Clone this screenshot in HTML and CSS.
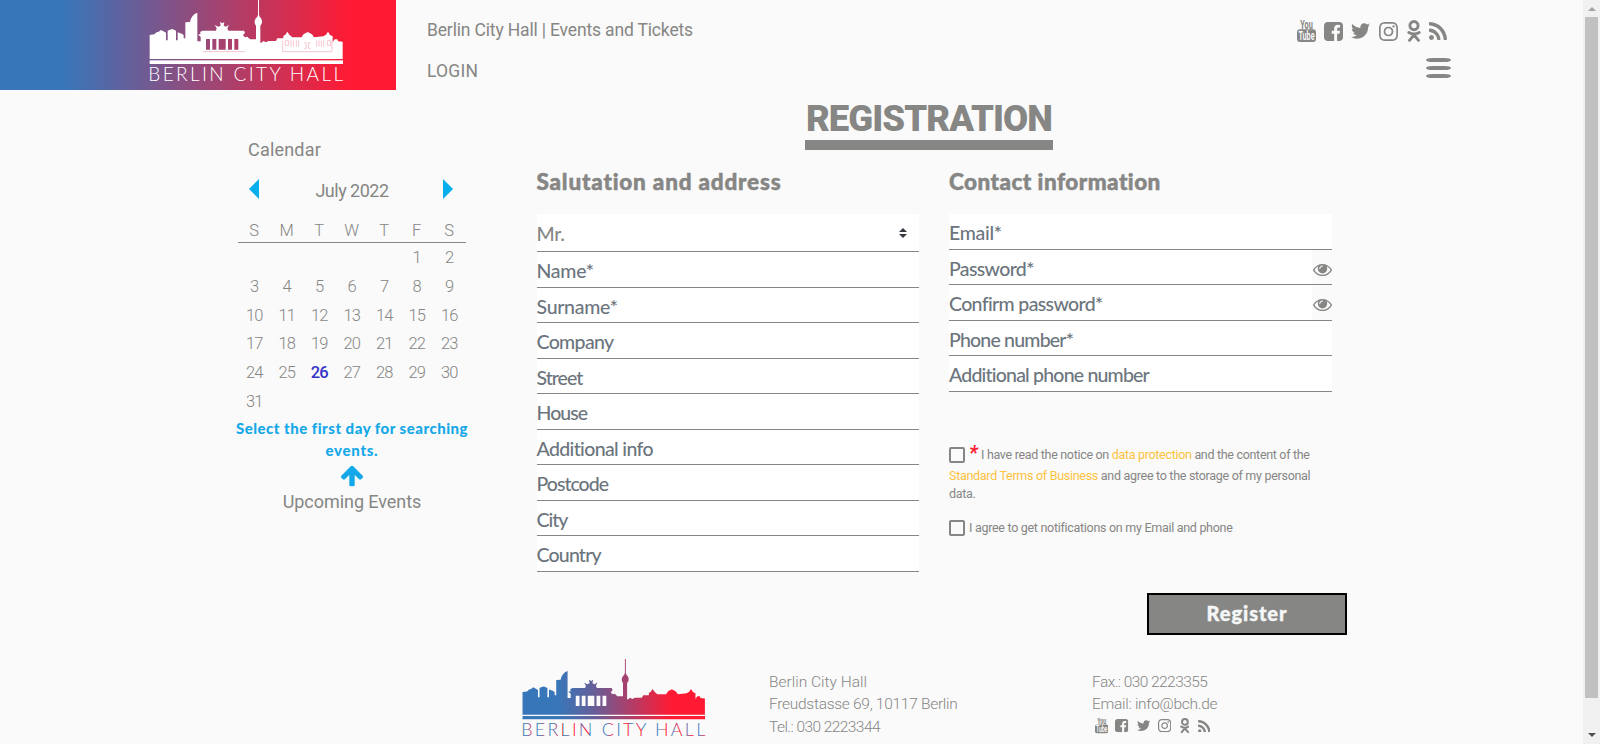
FILE: index.html
```html
<!DOCTYPE html>
<html lang="en">
<head>
<meta charset="utf-8">
<title>Berlin City Hall | Registration</title>
<link rel="stylesheet" href="styles.css">
</head>
<body>
<svg class="defs" aria-hidden="true">
  <defs>
    <linearGradient id="city" gradientUnits="userSpaceOnUse" x1="560" y1="0" x2="920" y2="0"><stop offset="0" stop-color="#3777b9"/><stop offset=".3" stop-color="#62609b"/><stop offset="1" stop-color="#ff1a33"/></linearGradient>
    <linearGradient id="letters" gradientUnits="userSpaceOnUse" x1="450" y1="0" x2="492" y2="0" spreadMethod="repeat"><stop offset="0" stop-color="#3777b9"/><stop offset=".3" stop-color="#3777b9"/><stop offset=".75" stop-color="#ff1a33"/><stop offset="1" stop-color="#ff1a33"/></linearGradient>
    <symbol id="skyline" viewBox="447 0 582 192">
      <path fill-rule="evenodd" d="M449 177V105L463 103L470 97L476 95L483 90L490 94L498 98V121H503V92L510 89L517 87L528 92V121H533V97L545 101L551 105V115H556V67L570 66Q574 44 592 38V124H602V110L594 104L602 102L600 96L608 92H648L650 84L644 75L655 80L662 77L660 66L667 70L673 66L671 77L678 80L687 74L682 85L685 92H732L735 98L729 106L735 112L742 110L750 118H768V77Q763 72 764 63Q766 54 772 50L774 44V0H777V44L779 50Q785 54 786 63Q787 72 781 77V128H785L790 123L798 127L805 123H828L832 115H850V108L856 104L862 95L868 104L877 112L905 112Q910 100 918 99L923 96L929 99Q938 102 942 112L970 109L978 104L984 95L990 105L998 109V126L1004 118L1012 118L1014 124L1028 125V177ZM618 117V149H630V117ZM637 117V149H649V117ZM656 117V149H677V117ZM684 117V149H696V117ZM703 117V149H715V117Z"/>
      <rect x="449" y="181" width="580" height="11"/>
    </symbol>
    <symbol id="i-youtube" viewBox="0 0 19 22"><text x="9.500" y="8.600" font-size="12" font-weight="700" text-anchor="middle" textLength="12.500" lengthAdjust="spacingAndGlyphs" font-family="Roboto, sans-serif">You</text><rect x="0" y="9.300" width="19" height="12.700" rx="3"/><text x="9.500" y="20" font-size="12" fill="#fafafa" font-weight="600" text-anchor="middle" textLength="16" lengthAdjust="spacingAndGlyphs" font-family="Roboto, sans-serif">Tube</text></symbol>
    <symbol id="i-facebook" viewBox="128 128 1536 1536"><path d="M1376 128q119 0 203.500 84.500t84.500 203.500v960q0 119-84.500 203.500t-203.500 84.500h-188v-595h199l30-232h-229v-148q0-56 23.500-84t91.500-28l122-1v-207q-63-9-178-9-136 0-217.500 80t-81.500 226v171h-200v232h200v595h-532q-119 0-203.500-84.500t-84.500-203.500v-960q0-119 84.500-203.500t203.500-84.500h960z"/></symbol>
    <symbol id="i-twitter" viewBox="108 256 1576 1280"><path d="M1684 408q-67 98-162 167 1 14 1 42 0 130-38 259.500t-115.500 248.500-184.500 210.500-258 146-323 54.500q-271 0-496-145 35 4 78 4 225 0 401-138-105-2-188-64.500t-114-159.500q33 5 61 5 43 0 85-11-112-23-185.500-111.500t-73.500-205.500v-4q68 38 146 41-66-44-105-115t-39-154q0-88 44-163 121 149 294.500 238.500t371.500 99.500q-8-38-8-74 0-134 94.500-228.500t228.500-94.500q140 0 236 102 109-21 205-78-37 115-142 178 93-10 186-50z"/></symbol>
    <symbol id="i-instagram" viewBox="128 128 1536 1536"><path d="M1152 896q0-106-75-181t-181-75-181 75-75 181 75 181 181 75 181-75 75-181zm138 0q0 164-115 279t-279 115-279-115-115-279 115-279 279-115 279 115 115 279zm108-410q0 38-27 65t-65 27-65-27-27-65 27-65 65-27 65 27 27 65zm-502-220q-7 0-76.500-.5t-105.500 0-96.500 3-103 10-71.500 18.500q-50 20-88 58t-58 88q-11 29-18.500 71.500t-10 103-3 96.500 0 105.500.5 76.500-.5 76.500 0 105.500 3 96.500 10 103 18.500 71.500q20 50 58 88t88 58q29 11 71.500 18.500t103 10 96.500 3 105.500 0 76.500-.5 76.500.5 105.500 0 96.500-3 103-10 71.500-18.500q50-20 88-58t58-88q11-29 18.500-71.500t10-103 3-96.500 0-105.500-.5-76.500.5-76.500 0-105.500-3-96.500-10-103-18.500-71.500q-20-50-58-88t-88-58q-29-11-71.500-18.500t-103-10-96.500-3-105.500 0-76.500.5zm768 630q0 229-5 317-10 208-124 322t-322 124q-88 5-317 5t-317-5q-208-10-322-124t-124-322q-5-88-5-317t5-317q10-208 124-322t322-124q88-5 317-5t317 5q208 10 322 124t124 322q5 88 5 317z"/></symbol>
    <symbol id="i-ok" viewBox="0 0 14 22"><g fill="none" stroke="currentColor" stroke-width="2.900"><circle cx="7" cy="5.600" r="4.100"/><path stroke-linecap="round" stroke-linejoin="round" d="M1.800 12.400Q7 15.600 12.200 12.400M7 14.800L2.500 20.300M7 14.800L11.500 20.300"/></g></symbol>
    <symbol id="i-rss" viewBox="192 128 1408 1408"><path d="M576 1344q0 80-56 136t-136 56-136-56-56-136 56-136 136-56 136 56 56 136zm512 123q2 28-17 48-18 21-47 21h-135q-25 0-43-16.500t-20-41.500q-22-229-184.500-391.500t-391.500-184.500q-25-2-41.500-20t-16.500-43v-135q0-29 21-47 17-17 43-17h5q160 13 306 80.500t259 181.500q114 113 181.500 259t80.500 306zm512 2q2 27-18 47-18 20-46 20h-143q-26 0-44.500-17.500t-19.500-42.500q-12-215-101-408.500t-231.500-336-336-231.500-408.500-102q-25-1-42.500-19.500t-17.500-43.500v-143q0-28 20-46 18-18 44-18h3q262 13 501.500 120t425.500 294q187 186 294 425.500t120 501.500z"/></symbol>
    <symbol id="i-arrow" viewBox="117 212 1558 1452"><path d="M1675 971q0 51-37 90l-75 75q-38 38-91 38-54 0-90-38l-294-293v704q0 52-37.500 84.500t-90.500 32.500h-128q-53 0-90.500-32.500t-37.500-84.500v-704l-294 293q-36 38-90 38t-90-38l-75-75q-38-38-38-90 0-53 38-91l651-651q35-37 90-37 54 0 91 37l651 651q37 39 37 91z"/></symbol>
    <symbol id="i-eye" viewBox="0 384 1792 1152"><path d="M1664 960q-152-236-381-353 61 104 61 225 0 185-131.500 316.500t-316.500 131.500-316.500-131.500-131.500-316.500q0-121 61-225-229 117-381 353 133 205 333.500 326.500t434.500 121.500 434.500-121.500 333.500-326.500zM944 576q0-20-14-34t-34-14q-125 0-214.500 89.500t-89.500 214.500q0 20 14 34t34 14 34-14 14-34q0-86 61-147t147-61q20 0 34-14t14-34zm848 384q0 34-20 69-140 230-376.500 368.500t-499.500 138.500-499.500-139-376.500-368q-20-35-20-69t20-69q140-229 376.500-368t499.500-139 499.500 139 376.500 368q20 35 20 69z"/></symbol>
  </defs>
</svg>

<div class="page">
  <header class="header">
    <a class="brand">
      <svg class="brand-logo" viewBox="441 0 600 264">
        <use href="#skyline" x="447" y="0" width="582" height="192"/>
        <g class="brand-detail"><path d="M608 155H735M848 122V155H996V122"/><path d="M856 122V136H866V122ZM873 121V140M880 121V140M889 121V140M896 121V140M913 128H918V146H913M931 128H926V146H931M950 121V140M957 121V140M964 121V140M971 121V140M982 122V136H992V122Z"/></g>
        <text class="brand-name" x="445" y="243" textLength="584" lengthAdjust="spacing">BERLIN CITY HALL</text>
      </svg>
    </a>
    <div class="header-text">
      <span class="site-title">Berlin City Hall | Events and Tickets</span>
      <a class="login">LOGIN</a>
    </div>
    <div class="header-side">
      <nav class="social">
        <svg class="s-yt"><use href="#i-youtube"/></svg><svg class="s-fb"><use href="#i-facebook"/></svg><svg class="s-tw"><use href="#i-twitter"/></svg><svg class="s-ig"><use href="#i-instagram"/></svg><svg class="s-ok"><use href="#i-ok"/></svg><svg class="s-rss"><use href="#i-rss"/></svg>
      </nav>
      <div class="burger"><i></i><i></i><i></i></div>
    </div>
  </header>

  <main class="main">
    <aside class="sidebar">
      <h2 class="side-title">Calendar</h2>
      <div class="month"><i class="prev"></i><span class="month-name">July 2022</span><i class="next"></i></div>
      <div class="week"><span>S</span><span>M</span><span>T</span><span>W</span><span>T</span><span>F</span><span>S</span></div>
      <div class="days">
        <span class="first">1</span><span>2</span>
        <span>3</span><span>4</span><span>5</span><span>6</span><span>7</span><span>8</span><span>9</span>
        <span>10</span><span>11</span><span>12</span><span>13</span><span>14</span><span>15</span><span>16</span>
        <span>17</span><span>18</span><span>19</span><span>20</span><span>21</span><span>22</span><span>23</span>
        <span>24</span><span>25</span><span class="today">26</span><span>27</span><span>28</span><span>29</span><span>30</span>
        <span>31</span>
      </div>
      <p class="hint">Select the first day for searching<br><span class="hint-end">events.</span></p>
      <svg class="up"><use href="#i-arrow"/></svg>
      <p class="upcoming">Upcoming Events</p>
    </aside>

    <section class="registration">
      <h1 class="title">REGISTRATION</h1>
      <div class="columns">
        <div class="column">
          <h3 class="group-title">Salutation and address</h3>
          <div class="field select"><span>Mr.</span><svg class="caret" viewBox="0 0 8 10"><path d="M0 4L4 0L8 4ZM0 6H8L4 10Z"/></svg></div>
          <div class="field starred">Name*</div>
          <div class="field starred">Surname*</div>
          <div class="field">Company</div>
          <div class="field tight">Street</div>
          <div class="field tight">House</div>
          <div class="field">Additional info</div>
          <div class="field tight">Postcode</div>
          <div class="field tight">City</div>
          <div class="field snug">Country</div>
        </div>
        <div class="column">
          <h3 class="group-title contact-title">Contact information</h3>
          <div class="field starred">Email*</div>
          <div class="field secret"><span>Password*</span><b class="peek"><svg><use href="#i-eye"/></svg></b></div>
          <div class="field secret"><span>Confirm password*</span><b class="peek"><svg><use href="#i-eye"/></svg></b></div>
          <div class="field snug">Phone number*</div>
          <div class="field snug">Additional phone number</div>
          <div class="consent">
            <div class="line line-a"><i class="box"></i><em class="star">*</em><span>I have read the notice on <a>data protection</a> and the content of the</span></div>
            <div class="line line-b"><span><a>Standard Terms of Business</a> and agree to the storage of my personal</span></div>
            <div class="line line-c">data.</div>
          </div>
          <div class="line notify"><i class="box"></i><span>I agree to get notifications on my Email and phone</span></div>
        </div>
      </div>
      <button class="register">Register</button>
    </section>
  </main>

  <footer class="footer">
    <svg class="footer-logo" viewBox="441 0 600 264">
      <use href="#skyline" x="447" y="0" width="582" height="192"/>
      <text class="brand-name" x="445" y="243" textLength="584" lengthAdjust="spacing">BERLIN CITY HALL</text>
    </svg>
    <address class="contact"><span class="org">Berlin City Hall</span><br>Freudstasse 69, 10117 Berlin<br><span class="phone">Tel.: 030 2223344</span></address>
    <address class="contact second"><span class="phone">Fax.: 030 2223355</span><br><span>Email: info@bch.de</span>
      <span class="social small">
        <svg class="s-yt"><use href="#i-youtube"/></svg><svg class="s-fb"><use href="#i-facebook"/></svg><svg class="s-tw"><use href="#i-twitter"/></svg><svg class="s-ig"><use href="#i-instagram"/></svg><svg class="s-ok"><use href="#i-ok"/></svg><svg class="s-rss"><use href="#i-rss"/></svg>
      </span>
    </address>
  </footer>
</div>
<div class="scrollbar"><i class="arrow-up"></i><div class="thumb"></div><i class="arrow-down"></i></div>
</body>
</html>
```
FILE: styles.css
```css
* { box-sizing: border-box; }
body {
  margin: 0;
  width: 1600px;
  height: 744px;
  overflow: hidden;
  display: flex;
  background: #fafafa;
  color: #868684;
  font-family: Roboto, "Open Sans", sans-serif;
}
h1, h2, h3, p { margin: 0; font-weight: inherit; }
svg { fill: currentColor; display: block; flex: none; }
.defs { position: absolute; width: 0; height: 0; }
.page { width: 1583px; height: 744px; display: flex; flex-direction: column; }

.header { height: 90px; display: flex; flex: none; }
.brand {
  width: 396px;
  height: 90px;
  padding-left: 147px;
  color: #fff;
  background: linear-gradient(90deg, #3777b9 62px, #5766a4 110px, #ff1a33 350px);
}
.brand-logo { width: 200px; height: 88px; }
.brand-detail { fill: none; stroke: #f0a9b8; stroke-width: 2; }
.brand-name { font: 300 57px Lato, sans-serif; }
.header-text {
  display: flex;
  flex-direction: column;
  gap: 18px;
  padding: 17px 0 0 31px;
  width: 902px;
  font-size: 17.500px;
  line-height: 24px;
  align-items: flex-start;
}
.site-title { letter-spacing: -.16px; padding-top: .5px; height: 24px; }
.login { letter-spacing: .2px; }
.header-side { width: 154px; }
.social { display: flex; align-items: center; height: 22px; margin: 20px 0 0 -1px; }
.s-yt { width: 19px; height: 22px; margin-right: 8px; }
.s-fb { width: 19px; height: 19px; margin-right: 8px; }
.s-tw { width: 19px; height: 16px; margin-right: 9px; }
.s-ig { width: 19px; height: 19px; margin-right: 9px; }
.s-ok { width: 14px; height: 22px; margin-right: 8px; }
.s-rss { width: 18px; height: 18px; }
.burger { width: 25px; margin: 16px 0 0 128px; display: grid; gap: 4px; }
.burger i { height: 4px; background: #868684; border-radius: 6px / 2px; }

.main { display: flex; height: 556px; flex: none; padding-left: 235px; }
.sidebar { width: 234px; padding: 47px 3px 0; font-size: 16.500px; }
.side-title { font-size: 18px; line-height: 26px; padding-left: 10px; letter-spacing: .2px; }
.month {
  display: flex;
  justify-content: space-between;
  align-items: center;
  padding: 0 13px 0 11px;
  margin-top: 13px;
  height: 26px;
}
.month-name { font-size: 18px; line-height: 26px; padding: 4px 0 0 2px; letter-spacing: -.5px; }
.prev, .next { border: 10px solid transparent; border-left-width: 0; border-right-color: #06aeec; }
.next { border-width: 10px 0 10px 10px; border-color: transparent transparent transparent #06aeec; }
.week, .days { display: grid; grid-template-columns: repeat(7, 32.500px); text-align: center; font-weight: 350; }
.week { margin-top: 14px; line-height: 30px; height: 27px; border-bottom: 1px solid #868684; }
.days { line-height: 28.800px; height: 173px; padding-top: 1px; letter-spacing: -.9px; }
.first { grid-column: 6; }
.today { color: #3532c6; font-weight: 500; }
.hint {
  font: 900 15px/22px Lato, sans-serif;
  color: #14a8e8;
  text-align: center;
  margin: 1px -10px 0;
  white-space: nowrap;
  letter-spacing: .5px;
}
.hint-end { letter-spacing: .7px; }
.up { width: 22px; height: 20.500px; color: #14a8e8; margin: 5px auto 0; }
.upcoming { font-size: 18px; line-height: 26px; text-align: center; margin-top: 2px; letter-spacing: -.05px; }

.registration { width: 878px; margin-left: 52px; padding-top: 8px; display: flex; flex-direction: column; }
.title {
  width: 248px;
  margin-left: 284px;
  border-bottom: 10px solid #868684;
  font-size: 36.500px;
  line-height: 42px;
  height: 52px;
  font-weight: 900;
  text-align: center;
  white-space: nowrap;
  letter-spacing: -.95px;
}
.columns { display: flex; gap: 30px; padding: 16px 0 0 15.500px; height: 443px; }
.column { width: 382.500px; white-space: nowrap; }
.group-title { font: 900 22.500px/31px Lato, sans-serif; height: 30px; margin-bottom: 18px; letter-spacing: .8px; -webkit-text-stroke: .5px; }
.contact-title { letter-spacing: .46px; }
.field {
  height: 35.500px;
  border-bottom: 1px solid #868684;
  background: #fff;
  font: 500 19.500px/37.500px Lato, sans-serif;
  letter-spacing: -.64px;
  color: #6c757d;
}
.tight { letter-spacing: -.98px; }
.snug { letter-spacing: -.8px; }
.starred { letter-spacing: -.28px; }
.select { height: 38px; line-height: 40px; letter-spacing: -.34px; color: #868684; display: flex; justify-content: space-between; }
.caret { width: 8px; height: 10px; margin: 14px 12px 0 0; color: #343a40; }
.secret { display: flex; justify-content: space-between; }
.peek { width: 20px; background: #fafafa; padding: 14px 0 0 1px; color: #868684; }
.peek svg { width: 19px; height: 12.200px; }
.consent { margin-top: 53px; }
.line { font-size: 12.500px; display: flex; line-height: 20px; letter-spacing: -.29px; }
.line a { color: #fdc23e; }
.line-a { height: 21px; letter-spacing: -.31px; }
.line-c { line-height: 15px; height: 17px; }
.box { width: 16px; height: 16px; border: 2px solid #868684; border-radius: 2px; margin: 2px 4px 0 0; flex: none; }
.star { color: #ff1a33; font-size: 20px; font-weight: 700; width: 12px; margin-top: -3px; }
.notify { margin-top: 15px; }
.register {
  width: 200px;
  height: 42px;
  margin-left: 626px;
  border: 2px solid #000;
  background: #868684;
  color: #f4f6f7;
  font: 900 20px/32px Lato, sans-serif;
  letter-spacing: .95px;
  -webkit-text-stroke: .4px;
  padding: 0 0 3px;
  flex: none;
}

.footer { display: flex; flex: 1; padding-left: 520px; }
.footer-logo { width: 189px; height: 83.200px; margin-top: 13px; fill: url(#city); }
.footer-logo .brand-name { fill: url(#letters); }
.contact {
  font: 350 15.500px/22.500px Roboto, sans-serif;
  width: 324px;
  margin-left: 60px;
  padding-top: 24.500px;
  white-space: nowrap;
  letter-spacing: -.28px;
}
.org { letter-spacing: 0; }
.phone { letter-spacing: -.56px; }
.second { margin-left: -1px; }
.small { height: 16px; margin: 2.500px 0 0 3px; }
.small svg { zoom: .7; }
.small .s-yt { margin-right: 10px; }
.small .s-fb, .small .s-tw { margin-right: 11.500px; }
.small .s-ig, .small .s-ok { margin-right: 12px; }

.scrollbar {
  width: 17px;
  height: 744px;
  background: #f1f1f1;
  padding: 7px 2px;
  display: flex;
  flex-direction: column;
  align-items: center;
}
.arrow-up, .arrow-down { border: 4px solid transparent; border-top-width: 0; border-bottom-color: #a3a3a3; }
.arrow-down { border-width: 4px 4px 0; border-color: #505050 transparent transparent; margin-top: auto; }
.thumb { width: 13px; height: 681px; background: #c1c1c1; margin-top: 6px; }
```
